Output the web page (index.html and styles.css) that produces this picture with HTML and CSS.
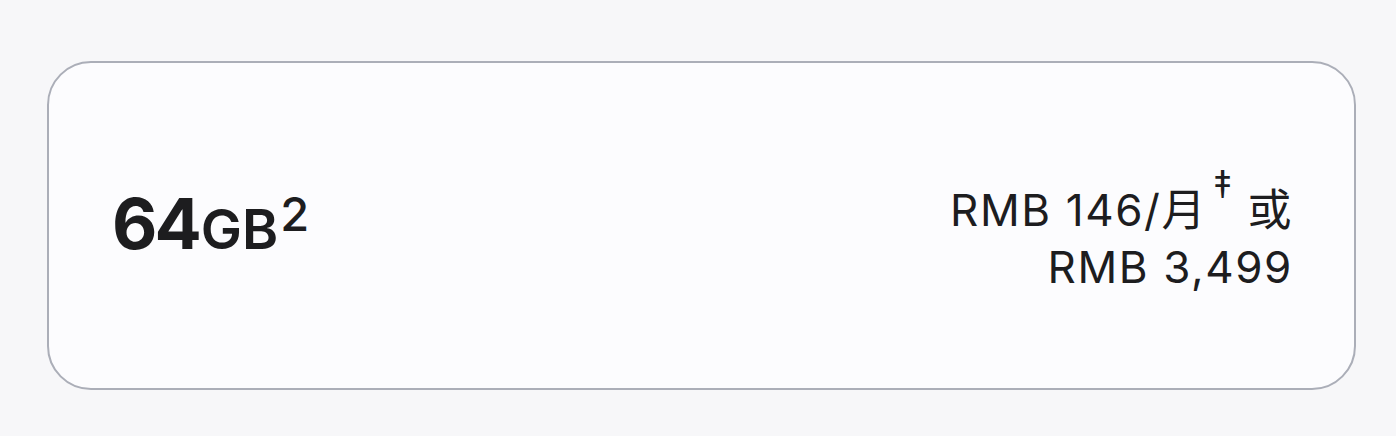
FILE: index.html
```html
<!DOCTYPE html>
<html lang="zh-CN">
  <head>
    <meta charset="UTF-8" />
    <meta name="viewport" content="width=device-width, initial-scale=1.0" />
    <title>iPhone 存储容量</title>
    <link rel="stylesheet" href="styles.css">
  </head>
  <body>
    <div class="page">
      <label class="option">
        <span class="capacity"><span class="num">64</span><span class="unit">GB</span><sup class="note">2</sup></span>
        <span class="price">
          <span class="line">RMB 146/月<sup class="mark">‡</sup> 或</span>
          <span class="line">RMB 3,499</span>
        </span>
      </label>
    </div>
  </body>
</html>
```

FILE: styles.css
```css
* {
  box-sizing: border-box;
}

body {
  margin: 0;
  background-color: #f7f7f9;
  color: #1d1d1f;
  font-family: Inter, "Noto Sans", "Noto Sans CJK SC", sans-serif;
}

.page {
  width: 1396px;
  height: 436px;
  padding: 61px 40px 46px 47px;
}

.option {
  display: flex;
  align-items: center;
  justify-content: space-between;
  height: 100%;
  padding: 0 61px 0 63px;
  background-color: #fcfcfe;
  border: 2px solid #abaeb8;
  border-radius: 44px;
}

.capacity {
  display: flex;
  align-items: baseline;
  margin-top: -4px;
}

.num {
  font-size: 70px;
  font-weight: 700;
  letter-spacing: -3px;
}

.unit {
  font-size: 55px;
  font-weight: 600;
  margin-left: 2px;
}

.note {
  font-size: 47px;
  font-weight: 500;
  position: relative;
  top: -18px;
  margin-left: 2px;
  vertical-align: baseline;
}

.price {
  display: flex;
  flex-direction: column;
  align-items: flex-end;
  font-size: 44px;
  line-height: 57px;
  letter-spacing: 1.6px;
  margin-top: 26px;
}

.mark {
  font-size: 38px;
  line-height: 1;
  vertical-align: baseline;
  position: relative;
  top: -28px;
  margin-left: 6px;
  margin-right: 0;
}
```
